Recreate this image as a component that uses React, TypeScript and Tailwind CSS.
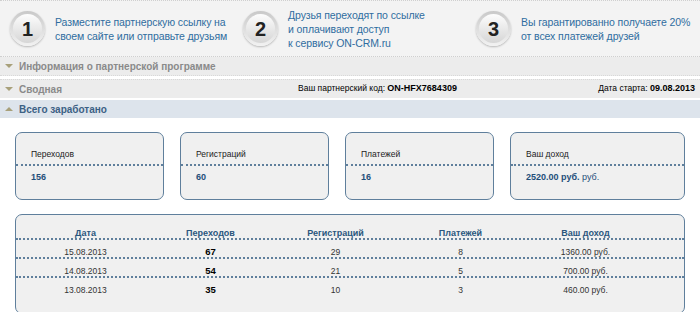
import React from 'react'

const steps = [
  { n: '1', lines: ['Разместите партнерскую ссылку на', 'своем сайте или отправьте друзьям'] },
  { n: '2', lines: ['Друзья переходят по ссылке', 'и оплачивают доступ', 'к сервису ON-CRM.ru'] },
  { n: '3', lines: ['Вы гарантированно получаете 20%', 'от всех платежей друзей'] },
]

const stats = [
  { label: 'Переходов', value: '156', w: 'w-[149px]' },
  { label: 'Регистраций', value: '60', w: 'w-[149px]' },
  { label: 'Платежей', value: '16', w: 'w-[149px]' },
  { label: 'Ваш доход', value: '2520.00 руб.', suffix: ' руб.', w: 'w-[175px]' },
]

const rows = [
  { date: '15.08.2013', visits: '67', regs: '29', pays: '8', income: '1360.00 руб.' },
  { date: '14.08.2013', visits: '54', regs: '21', pays: '5', income: '700.00 руб.' },
  { date: '13.08.2013', visits: '35', regs: '10', pays: '3', income: '460.00 руб.' },
]

function StepCircle({ n }: { n: string }) {
  return (
    <div className="w-[35px] h-[35px] rounded-full bg-gradient-to-b from-[#c9c9c9] to-[#f2f2f2] p-[3px] shadow-[0_1px_2px_rgba(0,0,0,0.25)] shrink-0">
      <div className="w-full h-full rounded-full bg-gradient-to-b from-[#fdfdfd] to-[#d6d6d6] flex items-center justify-center text-[20px] font-bold text-[#222]">
        {n}
      </div>
    </div>
  )
}

function Triangle({ up }: { up?: boolean }) {
  return (
    <svg width="8" height="6" viewBox="0 0 8 6" className="shrink-0">
      {up ? <path d="M0 5 L4 1 L8 5 Z" fill="#a8a07a" /> : <path d="M0 1 L8 1 L4 5 Z" fill="#a8a07a" />}
    </svg>
  )
}

export default function App() {
  return (
    <div className="w-[700px] h-[312px] bg-white overflow-hidden font-['Liberation_Sans',Arial,sans-serif] text-[9px] text-black">
      {/* Steps banner */}
      <div className="h-[57px] bg-[#f3f3f3] border-y border-dotted border-[#cfcfcf] flex items-center">
        {steps.map((s) => (
          <div key={s.n} className="w-[233px] flex items-center gap-[10px] pl-[10px]">
            <StepCircle n={s.n} />
            <div className="text-[#2f6da0] text-[10.5px] leading-[14px] tracking-[-0.1px] whitespace-nowrap">
              {s.lines.map((l) => (
                <div key={l}>{l}</div>
              ))}
            </div>
          </div>
        ))}
      </div>

      {/* Section bars */}
      <div className="h-[19px] bg-[#ececec] border-b border-dotted border-[#d8d8d8] flex items-center gap-[6px] pl-[5px]">
        <Triangle />
        <span className="font-bold text-[#8a8a8a] text-[10px]">Информация о партнерской программе</span>
      </div>
      <div className="h-[19px] mt-[3px] bg-[#ececec] border-t border-dotted border-[#d8d8d8] flex items-center pl-[5px] pr-[5px]">
        <div className="w-[293px] flex items-center gap-[6px]">
          <Triangle />
          <span className="font-bold text-[#8a8a8a] text-[10px]">Сводная</span>
        </div>
        <div className="flex-1 text-[8.5px]">
          Ваш партнерский код: <b className="text-[9px]">ON-HFX7684309</b>
        </div>
        <div className="text-[8.5px]">
          Дата старта: <b className="text-[9px]">09.08.2013</b>
        </div>
      </div>
      <div className="h-[18px] mt-[2px] bg-[#dde4ec] flex items-center gap-[6px] pl-[5px]">
        <Triangle up />
        <span className="font-bold text-[#3c6185] text-[10px]">Всего заработано</span>
      </div>

      {/* Stat cards */}
      <div className="flex gap-[16px] pl-[15px] mt-[14px]">
        {stats.map((s) => (
          <div
            key={s.label}
            className={`${s.w} h-[68px] bg-[#f0f0f0] border-[1.5px] border-[#5f7f9c] rounded-[7px] flex flex-col`}
          >
            <div className="h-[33px] pl-[15px] pt-[15px] border-b-2 border-dotted border-[#5f7f9c] text-[8.5px] text-[#222]">
              {s.label}
            </div>
            <div className="pl-[15px] pt-[5px] text-[9px]">
              <span className="font-bold text-[#1f4f7a]">{s.value}</span>
              {s.suffix && <span className="text-[#1f4f7a]">{s.suffix}</span>}
            </div>
          </div>
        ))}
      </div>

      {/* Daily table */}
      <div className="ml-[15px] mt-[14px] w-[670px] h-[100px] bg-[#f0f0f0] border-[1.5px] border-[#5f7f9c] rounded-[7px] pt-[13px]">
        <div className="grid grid-cols-[125px_125px_125px_125px_125px] pl-[7px] h-[12px] items-end border-b-2 border-dotted border-[#5f7f9c] font-bold text-[#2a567e] text-[9px] leading-[10px]">
          <div className="text-center">Дата</div>
          <div className="text-center">Переходов</div>
          <div className="text-center">Регистраций</div>
          <div className="text-center">Платежей</div>
          <div className="text-center">Ваш доход</div>
        </div>
        {rows.map((r, i) => (
          <div
            key={r.date}
            className={`grid grid-cols-[125px_125px_125px_125px_125px] pl-[7px] h-[19px] pt-[7px] items-baseline text-[8.5px] leading-[9px] text-[#333] ${
              i < rows.length - 1 ? 'border-b-2 border-dotted border-[#5f7f9c]' : ''
            }`}
          >
            <div className="text-center">{r.date}</div>
            <div className="text-center font-bold text-[9.5px] leading-[9px] text-black">{r.visits}</div>
            <div className="text-center">{r.regs}</div>
            <div className="text-center">{r.pays}</div>
            <div className="text-center">{r.income}</div>
          </div>
        ))}
      </div>
    </div>
  )
}
